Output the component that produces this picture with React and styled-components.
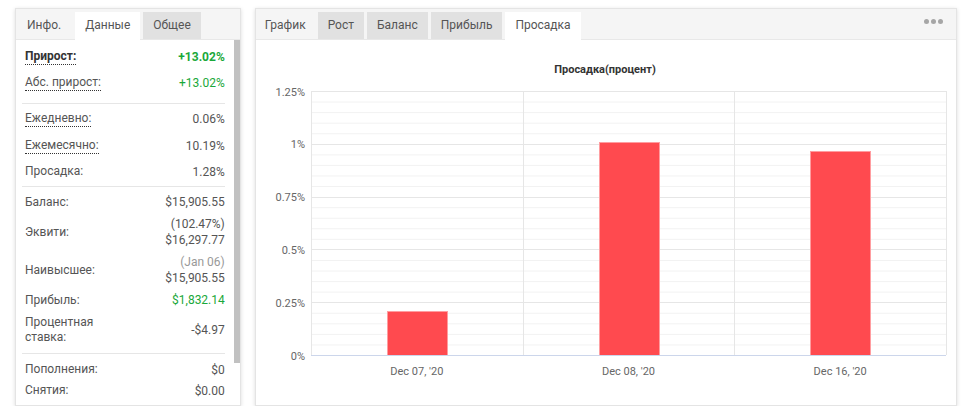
import React from 'react';
import styled, { createGlobalStyle } from 'styled-components';

const GlobalStyle = createGlobalStyle`
  html, body {
    margin: 0;
    padding: 0;
    background: #fff;
  }
  body {
    font-family: Roboto, "Liberation Sans", Arial, sans-serif;
    font-size: 12px;
    color: #555;
  }
`;

const Page = styled.div`
  display: flex;
  gap: 14px;
  padding: 8px 15px 0 15px;
`;

const Panel = styled.div`
  width: ${(p) => p.width}px;
  height: 398px;
  box-sizing: border-box;
  border: 1px solid #e4e4e4;
  background: #fff;
  box-shadow: 0 1px 4px rgba(0, 0, 0, 0.14);
  display: flex;
  flex-direction: column;
  overflow: hidden;
`;

const TabBar = styled.div`
  display: flex;
  align-items: flex-end;
  gap: 3px;
  height: 31px;
  background: #f5f5f5;
  border-bottom: 1px solid #e8e8e8;
  box-sizing: border-box;
  position: relative;
`;

const Tab = styled.div`
  line-height: 27px;
  padding: 0 ${(p) => p.pad || 10}px;
  background: ${(p) => (p.active ? '#fff' : p.plain ? 'transparent' : '#e1e1e1')};
  color: #555;
  margin-bottom: ${(p) => (p.active ? '-1px' : '0')};
  height: ${(p) => (p.active ? '28px' : '27px')};
`;

const Dots = styled.div`
  position: absolute;
  right: 13px;
  top: 10px;
  display: flex;
  gap: 2px;
  span {
    width: 5px;
    height: 5px;
    border-radius: 50%;
    background: #a6a6a6;
  }
`;

const Body = styled.div`
  flex: 1;
  display: flex;
  min-height: 0;
`;

const Content = styled.div`
  flex: 1;
  padding: 0 9px 0 6px;
`;

const Track = styled.div`
  width: 6px;
`;

const Thumb = styled.div`
  width: 6px;
  height: 323px;
  background: #c1c1c1;
`;

const Section = styled.div`
  padding: ${(p) => p.pad};
  border-top: ${(p) => (p.first ? 'none' : '1px solid #e6e6e6')};
`;

const Row = styled.div`
  display: flex;
  justify-content: space-between;
  align-items: center;
  height: ${(p) => p.h}px;
  padding: 0 0 0 3px;
  line-height: 16px;
`;

const Label = styled.span`
  color: ${(p) => (p.strong ? '#333' : '#555')};
  font-weight: ${(p) => (p.strong ? 700 : 400)};
  border-bottom: ${(p) => (p.dotted ? '1px dotted #333' : 'none')};
  line-height: 15px;
`;

const Value = styled.span`
  text-align: right;
  color: ${(p) => (p.green ? '#1aa83a' : '#555')};
  font-weight: ${(p) => (p.strong ? 700 : 400)};
`;

const Muted = styled.span`
  color: #999;
`;

const ChartBox = styled.div`
  flex: 1;
`;

const bars = [
  { label: "Dec 07, '20", value: 0.21 },
  { label: "Dec 08, '20", value: 1.01 },
  { label: "Dec 16, '20", value: 0.965 },
];

const Chart = () => {
  const left = 55;
  const right = 690;
  const top = 51;
  const bottom = 315;
  const h = bottom - top;
  const catW = (right - left) / bars.length;
  const major = [0, 0.25, 0.5, 0.75, 1, 1.25];
  const minor = [];
  for (let i = 0; i <= 25; i += 1) {
    if (i % 5 !== 0) minor.push(i * 0.05);
  }
  const y = (v) => bottom - (v / 1.25) * h;
  const fmt = (v) => (v === 0 ? '0%' : `${+v.toFixed(2)}%`);

  return (
    <svg width="701" height="364" style={{ display: 'block' }}>
      <text
        x="349"
        y="33"
        textAnchor="middle"
        fontSize="11"
        fontWeight="700"
        fill="#333"
        fontFamily="Roboto, sans-serif"
      >
        Просадка(процент)
      </text>
      {minor.map((v) => (
        <line key={`m${v}`} x1={left} x2={right} y1={y(v) + 0.5} y2={y(v) + 0.5} stroke="#f2f2f2" />
      ))}
      {major.map((v) => (
        <line key={`g${v}`} x1={left} x2={right} y1={Math.round(y(v)) + 0.5} y2={Math.round(y(v)) + 0.5} stroke="#e6e6e6" />
      ))}
      {[0, 1, 2, 3].map((i) => (
        <line
          key={`v${i}`}
          x1={Math.round(left + i * catW) + 0.5}
          x2={Math.round(left + i * catW) + 0.5}
          y1={top}
          y2={bottom}
          stroke="#e6e6e6"
        />
      ))}
      {bars.map((b, i) => {
        const cx = left + catW * (i + 0.5);
        const t = Math.round(y(b.value));
        return (
          <rect
            key={b.label}
            x={Math.round(cx - 30) + 0.5}
            y={t + 0.5}
            width="60"
            height={bottom - t}
            fill="#ff4a4f"
            stroke="#ff9da0"
            strokeWidth="1"
          />
        );
      })}
      <line x1={left} x2={right} y1={bottom + 0.5} y2={bottom + 0.5} stroke="#ccd6eb" />
      {major.map((v) => (
        <text
          key={`l${v}`}
          x="49"
          y={y(v) + 4.5}
          textAnchor="end"
          fontSize="11"
          fill="#666"
          fontFamily="Roboto, sans-serif"
        >
          {fmt(v)}
        </text>
      ))}
      {bars.map((b, i) => (
        <text
          key={`x${b.label}`}
          x={left + catW * (i + 0.5)}
          y="335"
          textAnchor="middle"
          fontSize="11"
          fill="#666"
          fontFamily="Roboto, sans-serif"
        >
          {b.label}
        </text>
      ))}
    </svg>
  );
};

const StatsPanel = () => (
  <Panel width={226}>
    <TabBar>
      <Tab plain pad={11}>Инфо.</Tab>
      <Tab active>Данные</Tab>
      <Tab>Общее</Tab>
    </TabBar>
    <Body>
      <Content>
        <Section first pad="4px 0 7px">
          <Row h={26}>
            <Label strong dotted>Прирост:</Label>
            <Value green strong>+13.02%</Value>
          </Row>
          <Row h={26}>
            <Label dotted>Абс. прирост:</Label>
            <Value green>+13.02%</Value>
          </Row>
        </Section>
        <Section pad="2px 0 2px">
          <Row h={26}>
            <Label dotted>Ежедневно:</Label>
            <Value>0.06%</Value>
          </Row>
          <Row h={27}>
            <Label dotted>Ежемесячно:</Label>
            <Value>10.19%</Value>
          </Row>
          <Row h={25}>
            <Label>Просадка:</Label>
            <Value>1.28%</Value>
          </Row>
        </Section>
        <Section pad="4px 0 4px">
          <Row h={22}>
            <Label>Баланс:</Label>
            <Value>$15,905.55</Value>
          </Row>
          <Row h={38}>
            <Label>Эквити:</Label>
            <Value>(102.47%)<br />$16,297.77</Value>
          </Row>
          <Row h={38}>
            <Label>Наивысшее:</Label>
            <Value><Muted>(Jan 06)</Muted><br />$15,905.55</Value>
          </Row>
          <Row h={22}>
            <Label>Прибыль:</Label>
            <Value green>$1,832.14</Value>
          </Row>
          <Row h={38}>
            <Label>Процентная<br />ставка:</Label>
            <Value>-$4.97</Value>
          </Row>
        </Section>
        <Section pad="5px 0 0">
          <Row h={21}>
            <Label>Пополнения:</Label>
            <Value>$0</Value>
          </Row>
          <Row h={21}>
            <Label>Снятия:</Label>
            <Value>$0.00</Value>
          </Row>
        </Section>
      </Content>
      <Track>
        <Thumb />
      </Track>
    </Body>
  </Panel>
);

const ChartPanel = () => (
  <Panel width={703}>
    <TabBar>
      <Tab plain pad={9}>График</Tab>
      <Tab>Рост</Tab>
      <Tab>Баланс</Tab>
      <Tab>Прибыль</Tab>
      <Tab active>Просадка</Tab>
      <Dots>
        <span />
        <span />
        <span />
      </Dots>
    </TabBar>
    <ChartBox>
      <Chart />
    </ChartBox>
  </Panel>
);

const App = () => (
  <>
    <GlobalStyle />
    <Page>
      <StatsPanel />
      <ChartPanel />
    </Page>
  </>
);

export default App;
